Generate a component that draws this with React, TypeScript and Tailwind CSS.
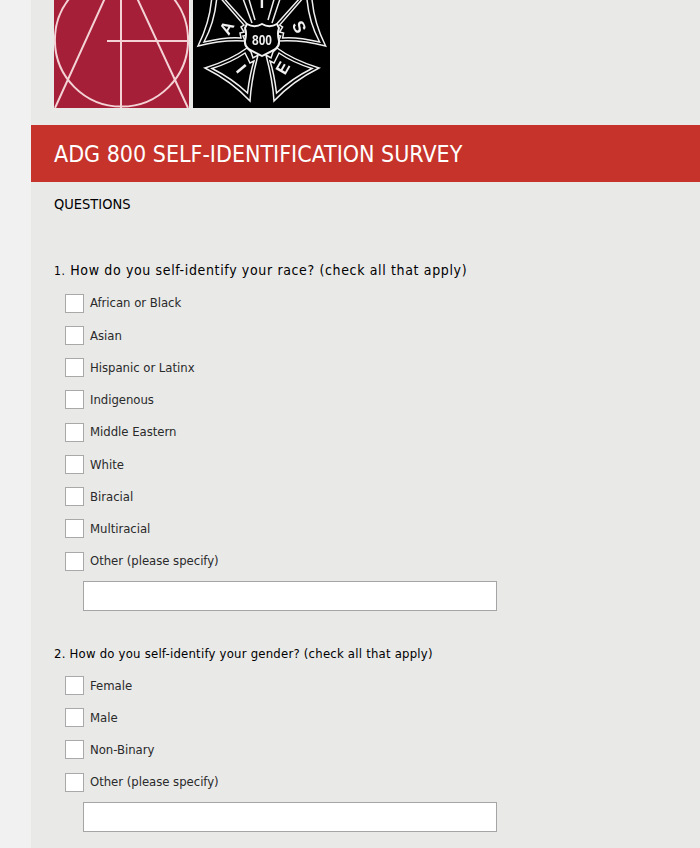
const race = ["African or Black","Asian","Hispanic or Latinx","Indigenous","Middle Eastern","White","Biracial","Multiracial","Other (please specify)"];
const gender = ["Female","Male","Non-Binary","Other (please specify)"];

function GuildLogo() {
  return (
    <svg width="135" height="108" viewBox="0 0 135 108" className="block shrink-0 blur-[0.3px]">
      <rect width="135" height="108" fill="#a61f38" />
      <g fill="none" stroke="#f4d3d6" strokeWidth="2">
        <circle cx="67.5" cy="40" r="66.6" />
        <path d="M51 -2L1 108M83 -2L134 108M53 41H135M67 0V108" />
      </g>
    </svg>
  );
}

function Petal({ d }: { d: string }) {
  return <path d={d} fill="#000" stroke="#f0f0f0" strokeWidth="1.5" strokeLinejoin="miter" />;
}

function IatseLogo() {
  const upperL = "M19 -6C18 14 13 30 5 46C20 42 36 40 52 41L50 36L55 35L52 30L56 28L53 23L27 -6Z";
  const upperLIn = "M24 -6C23 14 18 29 11 42C24 39 37 37 48 38L47 33L51 32L48 27L51 25L24 -6Z";
  const lowerL = "M54 48C42 57 28 63 12 68C28 76 44 87 57 101C58 84 61 70 65 55L60 58L58 52Z";
  const lowerLIn = "M52 53C42 60 30 65 19 68.500C32 75 45 84 54.500 93C56 81 58 70 61 61L57 63Z";
  return (
    <svg width="137" height="108" viewBox="0 0 137 108" className="block shrink-0 blur-[0.3px]">
      <rect width="137" height="108" fill="#000" />
      <path d="M49 -4L59 23M55 -4L62 20M88 -4L79 23M82 -4L75 20" fill="none" stroke="#eee" strokeWidth="1.5" />
      <Petal d={upperL} />
      <Petal d={upperLIn} />
      <g transform="matrix(-1 0 0 1 137.6 0)">
        <Petal d={upperL} />
        <Petal d={upperLIn} />
      </g>
      <Petal d={lowerL} />
      <Petal d={lowerLIn} />
      <g transform="matrix(-1 0 0 1 138 0)">
        <Petal d={lowerL} />
        <Petal d={lowerLIn} />
      </g>
      <path d="M69 24C74 27 79 27 84 24L86 28C84 33 85 37 86 41C87 49 78 51 69 56C60 51 51 49 52 41C53 37 54 33 52 28L54 24C59 27 64 27 69 24Z" fill="#000" stroke="#f2f2f2" strokeWidth="2" />
      <rect x="67.7" y="0" width="2.4" height="8" fill="#eee" />
      <g fill="#f2f2f2" fontFamily="'Liberation Sans', sans-serif" fontWeight="700" textAnchor="middle" dominantBaseline="central">
        <text x="69" y="39.5" fontSize="15" textLength="20" lengthAdjust="spacingAndGlyphs">800</text>
        <text x="34" y="28" fontSize="17" transform="rotate(-60 34 28)">A</text>
        <text x="106" y="27" fontSize="17" transform="rotate(65 106 27)">S</text>
        <text x="90" y="68" fontSize="17" transform="rotate(-60 90 68)">E</text>
        <text x="48" y="69" fontSize="17" transform="rotate(50 48 69)">I</text>
      </g>
    </svg>
  );
}

function Option({ label }: { label: string }) {
  return (
    <div className="flex h-[32.25px] items-center pl-[11px]">
      <span className="h-[19px] w-[19px] shrink-0 border border-[#a9a9a9] bg-white" />
      <span className="ml-[6px] text-[13px] tracking-[-0.03px] text-[#2a2a2a]">{label}</span>
    </div>
  );
}

function OtherInput() {
  return <div className="ml-[29px] h-[30px] w-[414px] border border-[#a5a5a5] bg-white" />;
}

export default function App() {
  return (
    <div className="h-[848px] w-[700px] overflow-hidden bg-[#f1f1f1] pl-[31px] font-['DejaVu_Sans_Condensed','DejaVu_Sans',sans-serif] text-black">
      <div className="h-full bg-[#e9e9e8]">
        <div className="flex h-[125px] gap-[4px] pl-[23px]">
          <GuildLogo />
          <IatseLogo />
        </div>
        <div className="flex h-[57px] items-center bg-[#c6332a] pl-[23px] pt-[2px] text-[23px] text-white">
          ADG 800 SELF-IDENTIFICATION SURVEY
        </div>
        <div className="pl-[23px]">
          <div className="mt-[13px] text-[14.5px] leading-[18px]">QUESTIONS</div>
          <div className="mt-[47px] text-[14px] leading-[20px] tracking-[0.64px]">
            <span className="text-[12px]">1.</span> How do you self-identify your race? (check all that apply)
          </div>
          <div className="mt-[6px]">
            {race.map((r) => (
              <Option key={r} label={r} />
            ))}
          </div>
          <div className="mt-[4px]"><OtherInput /></div>
          <div className="mt-[33px] text-[13px] leading-[20px] tracking-[0.22px]">
            2. How do you self-identify your gender? (check all that apply)
          </div>
          <div className="mt-[5px]">
            {gender.map((r) => (
              <Option key={r} label={r} />
            ))}
          </div>
          <div className="mt-[4px]"><OtherInput /></div>
        </div>
      </div>
    </div>
  );
}
